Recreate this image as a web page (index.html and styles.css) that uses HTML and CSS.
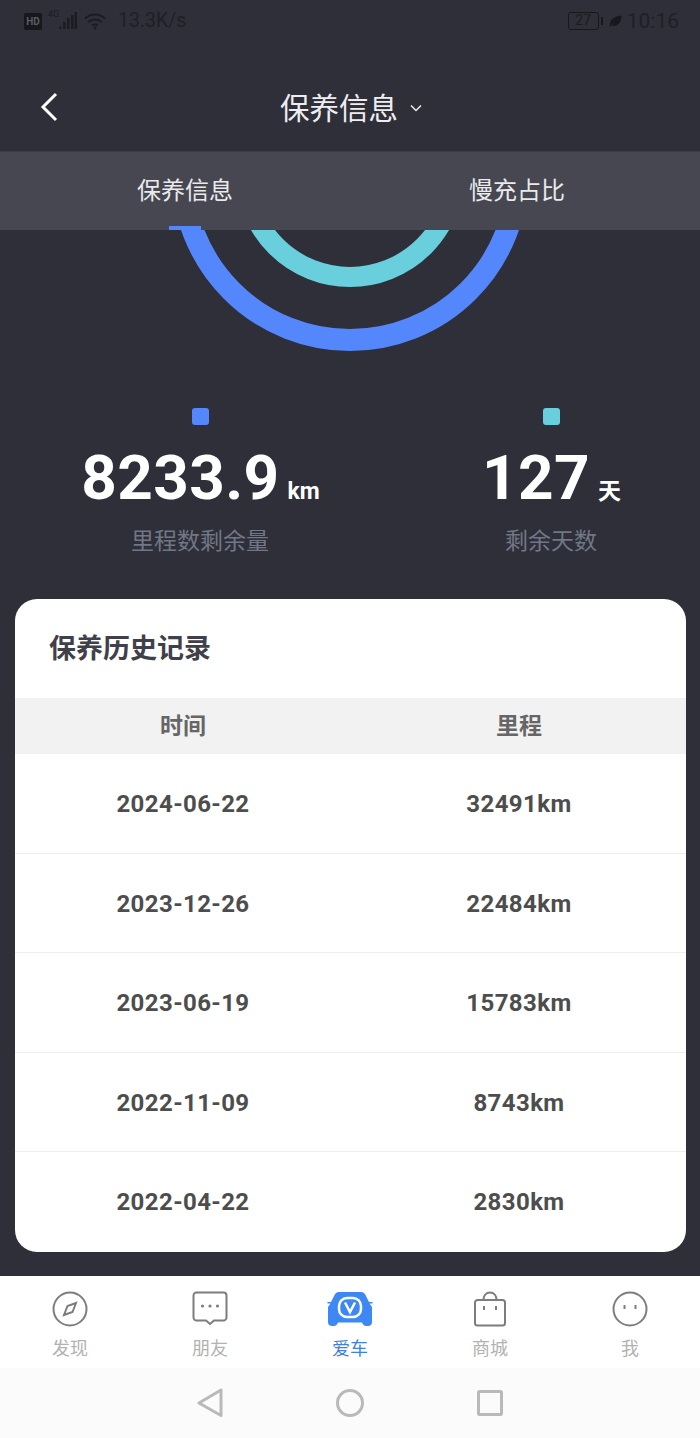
FILE: index.html
```html
<!DOCTYPE html>
<html lang="en">
<head>
    <meta charset="UTF-8">
    <meta name="viewport" content="width=device-width, initial-scale=1.0">
    <title>保养信息</title>
    <link rel="stylesheet" href="styles.css">
</head>
<body>
    <div class="statusbar">
        <div class="status-left">
            <span class="hd">HD</span>
            <span class="net">4G</span>
            <svg class="signal" width="18" height="18" viewBox="0 0 18 18">
                <rect x="0" y="14.500" width="2.400" height="2.500" />
                <rect x="4" y="10" width="2.400" height="7" />
                <rect x="8" y="6" width="2.400" height="11" />
                <rect x="12" y="3" width="2.400" height="14" />
                <rect x="15.600" y="0" width="2.400" height="17" />
            </svg>
            <svg class="wifi" width="22" height="18" viewBox="0 0 22 18" fill="none">
                <path d="M1 6.500C6.500 1 15.500 1 21 6.500M4.500 10C8 6.500 14 6.500 17.500 10M8 13.500C9.500 12 12.500 12 14 13.500" />
                <circle cx="11" cy="16" r="1.500" class="wifi-dot" />
            </svg>
            <span class="speed">13.3K/s</span>
        </div>
        <div class="status-right">
            <span class="battery">27</span>
            <span class="battery-tip"></span>
            <svg class="leaf" width="13" height="13" viewBox="0 0 13 13">
                <path d="M1 12C0 6 4 1 12.500 0.500C12.500 8 8 12 3 10.500L6.500 5.500Z" />
            </svg>
            <span class="time">10:16</span>
        </div>
    </div>

    <header class="titlebar">
        <svg class="back" width="18" height="30" viewBox="0 0 18 30" fill="none">
            <path d="M16 2L3 15L16 28" />
        </svg>
        <h1>保养信息</h1>
        <svg class="caret" width="12" height="8" viewBox="0 0 12 8" fill="none">
            <path d="M1 1.500L6 6.500L11 1.500" />
        </svg>
    </header>

    <nav class="tabs">
        <a class="tab active">保养信息</a>
        <a class="tab">慢充占比</a>
    </nav>

    <svg class="rings" width="700" height="178" viewBox="0 0 700 178" fill="none">
        <circle class="ring-km" cx="350" cy="-57.500" r="167.500" />
        <circle class="ring-days" cx="350" cy="-57.500" r="104.500" />
    </svg>

    <section class="stats">
        <div class="stat">
            <span class="dot dot-km"></span>
            <div class="value">8233.9<small>km</small></div>
            <div class="label">里程数剩余量</div>
        </div>
        <div class="stat">
            <span class="dot dot-days"></span>
            <div class="value">127<small>天</small></div>
            <div class="label">剩余天数</div>
        </div>
    </section>

    <section class="card">
        <h2>保养历史记录</h2>
        <div class="row head"><span>时间</span><span>里程</span></div>
        <div class="row"><span>2024-06-22</span><span>32491km</span></div>
        <div class="row"><span>2023-12-26</span><span>22484km</span></div>
        <div class="row"><span>2023-06-19</span><span>15783km</span></div>
        <div class="row"><span>2022-11-09</span><span>8743km</span></div>
        <div class="row"><span>2022-04-22</span><span>2830km</span></div>
    </section>

    <footer class="tabbar">
        <a class="item">
            <svg width="36" height="36" viewBox="0 0 36 36" fill="none">
                <circle cx="18" cy="18" r="16.500" />
                <path d="M24 12L20.500 21L12 24L15.500 15Z" />
            </svg>
            发现
        </a>
        <a class="item">
            <svg width="36" height="36" viewBox="0 0 36 36" fill="none">
                <path d="M4.500 1.500H31.500A3 3 0 0 1 34.500 4.500V26.500A3 3 0 0 1 31.500 29.500H22L18 33L14 29.500H4.500A3 3 0 0 1 1.500 26.500V4.500A3 3 0 0 1 4.500 1.500Z" />
                <circle class="solid" cx="10.500" cy="15" r="1.600" />
                <circle class="solid" cx="18" cy="15" r="1.600" />
                <circle class="solid" cx="25.500" cy="15" r="1.600" />
            </svg>
            朋友
        </a>
        <a class="item active">
            <svg width="46" height="36" viewBox="0 0 46 36">
                <path class="car" d="M12 1H34C36 1 37.500 2 38.500 4L42 11H45.500V12.500H42.500L45 16V31C45 33.500 43.500 35 41 35H39C37 35 36 33.500 35 31.500H11C10 33.500 9 35 7 35H5C2.500 35 1 33.500 1 31V16L3.500 12.500H.5V11H4L7.500 4C8.500 2 10 1 12 1Z" />
                <rect class="badge" x="12" y="7" width="22" height="19" rx="8" />
                <path class="badge" d="M18 11.500L23 21L28 11.500" />
            </svg>
            爱车
        </a>
        <a class="item">
            <svg width="36" height="36" viewBox="0 0 36 36" fill="none">
                <path d="M5.500 9H30.500A2.500 2.500 0 0 1 33 11.500V32A2.500 2.500 0 0 1 30.500 34.500H5.500A2.500 2.500 0 0 1 3 32V11.500A2.500 2.500 0 0 1 5.500 9Z" />
                <path d="M11.500 9C11.500 4.500 14 1.500 18 1.500C22 1.500 24.500 4.500 24.500 9" />
                <path d="M12 15V19M24 15V19" />
            </svg>
            商城
        </a>
        <a class="item">
            <svg width="36" height="36" viewBox="0 0 36 36" fill="none">
                <circle cx="18" cy="18" r="16.500" />
                <path d="M12.500 14V18M23.500 14V18" />
            </svg>
            我
        </a>
    </footer>

    <div class="navbar">
        <svg width="26" height="30" viewBox="0 0 26 30" fill="none">
            <path d="M24 2V27.500L2 15Z" />
        </svg>
        <svg width="30" height="30" viewBox="0 0 30 30" fill="none">
            <circle cx="15" cy="15" r="12.500" />
        </svg>
        <svg width="26" height="26" viewBox="0 0 26 26" fill="none">
            <rect x="1.500" y="1.500" width="23" height="23" rx="1" />
        </svg>
    </div>
</body>
</html>
```

FILE: styles.css
```css
* {
    box-sizing: border-box;
}

body {
    width: 700px;
    margin: 0;
    background-color: #2e2f39;
    font-family: "Noto Sans CJK SC", "Noto Sans", sans-serif;
    overflow: hidden;
}

/* status bar */
.statusbar {
    display: flex;
    justify-content: space-between;
    align-items: center;
    height: 44px;
    padding: 0 21px 2px 24px;
    color: #1b1c23;
}

.status-left,
.status-right {
    display: flex;
    align-items: center;
}

.hd {
    width: 18px;
    height: 17px;
    border-radius: 2px;
    background-color: #17181e;
    color: #5b5c66;
    font: bold 10px/17px Roboto, sans-serif;
    text-align: center;
}

.net {
    align-self: flex-start;
    width: 11px;
    margin: 0 0 0 6px;
    font: 9px/10px "Roboto", sans-serif;
}

.signal {
    fill: #1b1c23;
}

.wifi {
    margin-left: 7px;
    stroke: #1b1c23;
    stroke-width: 2;
}

.wifi-dot {
    fill: #1b1c23;
    stroke: none;
}

.speed {
    margin-left: 12px;
    font: 19.500px/24px Roboto, sans-serif;
    color: #1e1f27;
}

.battery {
    width: 31px;
    height: 18px;
    border: 1.500px solid #17181e;
    border-radius: 3px;
    font: 14px/15px Roboto, sans-serif;
    text-align: center;
}

.battery-tip {
    width: 2px;
    height: 8px;
    margin-left: 2px;
    background-color: #17181e;
}

.leaf {
    margin-left: 6px;
    fill: #17181e;
}

.time {
    margin-left: 5px;
    font: 21px/24px Roboto, sans-serif;
    color: #1e1f27;
}

/* title */
.titlebar {
    position: relative;
    display: flex;
    justify-content: center;
    align-items: center;
    height: 108px;
    padding: 16px 0 0 2px;
    color: #eeeef0;
}

.titlebar h1 {
    margin: 0;
    font-size: 29.500px;
    font-weight: 400;
    line-height: 40px;
}

.back {
    position: absolute;
    left: 40px;
    top: 48px;
    stroke: #fff;
    stroke-width: 3;
}

.caret {
    margin: 3px 0 0 12px;
    stroke: #eeeef0;
    stroke-width: 1.500;
}

/* tabs */
.tabs {
    position: relative;
    display: grid;
    grid-template-columns: 1fr 1fr;
    height: 78px;
    padding: 0 17px 0 19px;
    background-color: #464751;
    box-shadow: 0 -1px 0 #3c3d47;
}

.tab {
    color: #eaeaec;
    font-size: 24px;
    line-height: 74px;
    text-align: center;
}

.tab.active::after {
    content: "";
    position: absolute;
    left: 169px;
    bottom: 0;
    width: 32px;
    height: 4px;
    background-color: #5487fb;
}

/* rings */
.rings {
    display: block;
}

.ring-km {
    stroke: #5487fb;
    stroke-width: 22;
}

.ring-days {
    stroke: #69cfdc;
    stroke-width: 20;
}

/* stats */
.stats {
    display: grid;
    grid-template-columns: 300px 298px;
    column-gap: 52px;
    padding-left: 50px;
}

.stat {
    display: flex;
    flex-direction: column;
    align-items: center;
}

.dot {
    width: 17px;
    height: 17px;
    border-radius: 3px;
}

.dot-km {
    background-color: #5487fb;
}

.dot-days {
    background-color: #69cfdc;
}

.value {
    height: 62px;
    margin-top: 22px;
    padding-left: 1px;
    color: #fff;
    font-family: Roboto, "Noto Sans CJK SC", sans-serif;
    font-size: 62px;
    font-weight: 700;
    line-height: 62px;
    letter-spacing: 0.4px;
    white-space: nowrap;
}

.value small {
    margin-left: 8px;
    font-size: 23px;
    line-height: 1;
    letter-spacing: 0;
}

.label {
    margin-top: 14px;
    color: #717786;
    font-size: 23px;
    line-height: 32px;
}

/* history card */
.card {
    width: 671px;
    height: 653px;
    margin: 44px 0 24px 15px;
    background-color: #fff;
    border-radius: 22px;
    overflow: hidden;
}

.card h2 {
    height: 99px;
    margin: 0;
    padding-left: 34px;
    color: #3f4049;
    font-size: 27px;
    font-weight: 700;
    line-height: 96px;
}

.row {
    display: grid;
    grid-template-columns: 336px 336px;
    height: 99.600px;
    border-bottom: 1px solid #eeeeee;
    color: #4d4d4d;
    font-family: Roboto, "Noto Sans CJK SC", sans-serif;
    font-size: 24px;
    font-weight: 700;
    letter-spacing: 0.4px;
    line-height: 100px;
    text-align: center;
}

.row:last-child {
    border-bottom: none;
}

.row.head {
    height: 56px;
    border-bottom: none;
    background-color: #f2f2f2;
    color: #666;
    font-family: "Noto Sans CJK SC", sans-serif;
    font-size: 23px;
    letter-spacing: 0;
    line-height: 52px;
}

/* bottom tabs */
.tabbar {
    display: grid;
    grid-template-columns: repeat(5, 140px);
    height: 92px;
    padding-top: 15px;
    background-color: #fff;
}

.item {
    display: flex;
    flex-direction: column;
    align-items: center;
    color: #b2b2b2;
    font-size: 18px;
    line-height: 26px;
}

.item svg {
    margin-bottom: 7px;
    stroke: #7d7d7d;
    stroke-width: 2;
}

.item .solid {
    fill: #7d7d7d;
    stroke: none;
}

.item.active {
    color: #3f82d9;
}

.item.active svg {
    stroke: none;
}

.item.active .badge {
    stroke: #fff;
    stroke-width: 2.500;
}

.car {
    fill: #3e88f5;
}

.badge {
    fill: none;
}

/* android nav */
.navbar {
    display: grid;
    grid-template-columns: repeat(3, 140px);
    justify-content: center;
    justify-items: center;
    align-items: center;
    height: 70px;
    background-color: #fbfbfb;
}

.navbar svg {
    stroke: #b9b9b9;
    stroke-width: 3;
    stroke-linejoin: round;
}
```
